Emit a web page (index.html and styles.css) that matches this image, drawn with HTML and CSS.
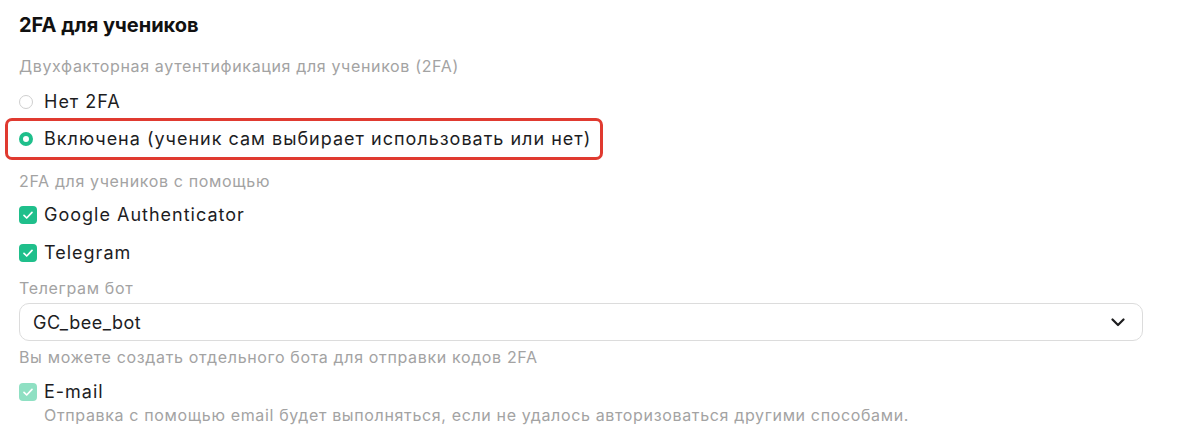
FILE: index.html
```html
<!DOCTYPE html>
<html lang="ru">
<head>
<meta charset="utf-8">
<link rel="stylesheet" href="styles.css">
</head>
<body>
<section class="panel">
  <h2 class="title">2FA для учеников</h2>
  <div class="label">Двухфакторная аутентификация для учеников (2FA)</div>
  <div class="group">
    <label class="opt"><span class="radio"></span><span>Нет 2FA</span></label>
    <label class="opt highlighted"><span class="radio on"></span><span>Включена (ученик сам выбирает использовать или нет)</span></label>
  </div>
  <div class="label label-gap">2FA для учеников с помощью</div>
  <div class="group group-checks">
    <label class="opt check-row"><span class="check"><svg viewBox="0 0 18 18" width="18" height="18"><path d="M5 9.3l2.7 2.7L13 6.4" fill="none" stroke="#fff" stroke-width="1.7" stroke-linecap="round" stroke-linejoin="round"/></svg></span><span>Google Authenticator</span></label>
    <label class="opt check-row"><span class="check"><svg viewBox="0 0 18 18" width="18" height="18"><path d="M5 9.3l2.7 2.7L13 6.4" fill="none" stroke="#fff" stroke-width="1.7" stroke-linecap="round" stroke-linejoin="round"/></svg></span><span>Telegram</span></label>
  </div>
  <div class="label label-bot">Телеграм бот</div>
  <div class="select">
    <span>GC_bee_bot</span>
    <svg class="chev" viewBox="0 0 14 9" width="14" height="9"><path d="M1.5 1.5l5.5 5.5 5.5-5.5" fill="none" stroke="#1d1d1f" stroke-width="2.2" stroke-linecap="round" stroke-linejoin="round"/></svg>
  </div>
  <div class="label hint">Вы можете создать отдельного бота для отправки кодов 2FA</div>
  <label class="opt email-row"><span class="check disabled"><svg viewBox="0 0 18 18" width="18" height="18"><path d="M5 9.3l2.7 2.7L13 6.4" fill="none" stroke="#fff" stroke-width="1.7" stroke-linecap="round" stroke-linejoin="round"/></svg></span><span>E-mail</span></label>
  <div class="label desc">Отправка с помощью email будет выполняться, если не удалось авторизоваться другими способами.</div>
</section>
</body>
</html>
```
FILE: styles.css
```css
* { box-sizing: border-box; }
html, body { margin: 0; padding: 0; background: #fff; }
body {
  font-family: Inter, "Noto Sans", sans-serif;
  color: #1d1d1f;
}
.panel {
  width: 1162px;
  padding: 11px 19px 0 19px;
  display: flex;
  flex-direction: column;
  align-items: flex-start;
}
.title {
  margin: 0;
  font-size: 20px;
  font-weight: 700;
  line-height: 28px;
  color: #111;
}
.label {
  font-size: 16px;
  line-height: 24px;
  letter-spacing: 0.65px;
  color: #a3a3a3;
  margin-top: 15px;
}
.group { display: flex; flex-direction: column; align-items: flex-start; margin-top: 5px; }
.group-checks { margin-top: 3px; }
.opt {
  position: relative;
  display: inline-flex;
  align-items: center;
  gap: 11px;
  height: 37px;
  font-size: 18px;
  line-height: 24px;
  letter-spacing: 1px;
  color: #1d1d1f;
}
.highlighted::before {
  content: "";
  position: absolute;
  top: -2px; bottom: -3px; left: -14px; right: -12px;
  border: 3px solid #e03a30;
  border-radius: 7px;
}
.radio {
  width: 14px; height: 14px;
  border-radius: 50%;
  border: 1.5px solid #cfcfcf;
  background: #fff;
  flex: none;
}
.radio.on {
  border: 4.5px solid #1fbf8b;
  background: #fff;
}
.label-gap { margin-top: 12px; }
.check-row { height: 38px; gap: 7px; }
.check {
  width: 18px; height: 18px;
  border-radius: 4px;
  background: #1fbf8b;
  display: inline-flex;
  flex: none;
}
.check.disabled { background: #8fe0c3; }
.label-bot { margin-top: 4px; }
.select {
  margin-top: 3px;
  width: 1124px;
  height: 38px;
  border: 1px solid #dcdcdc;
  border-radius: 10px;
  display: flex;
  align-items: center;
  justify-content: space-between;
  padding: 0 17px 0 13px;
  font-size: 18px;
  letter-spacing: 0.5px;
  color: #1d1d1f;
}
.chev { display: block; }
.hint { margin-top: 4px; }
.email-row { height: 24px; gap: 7px; margin-top: 11px; }
.desc { margin-top: 1px; margin-left: 25px; line-height: 20px; }
```
